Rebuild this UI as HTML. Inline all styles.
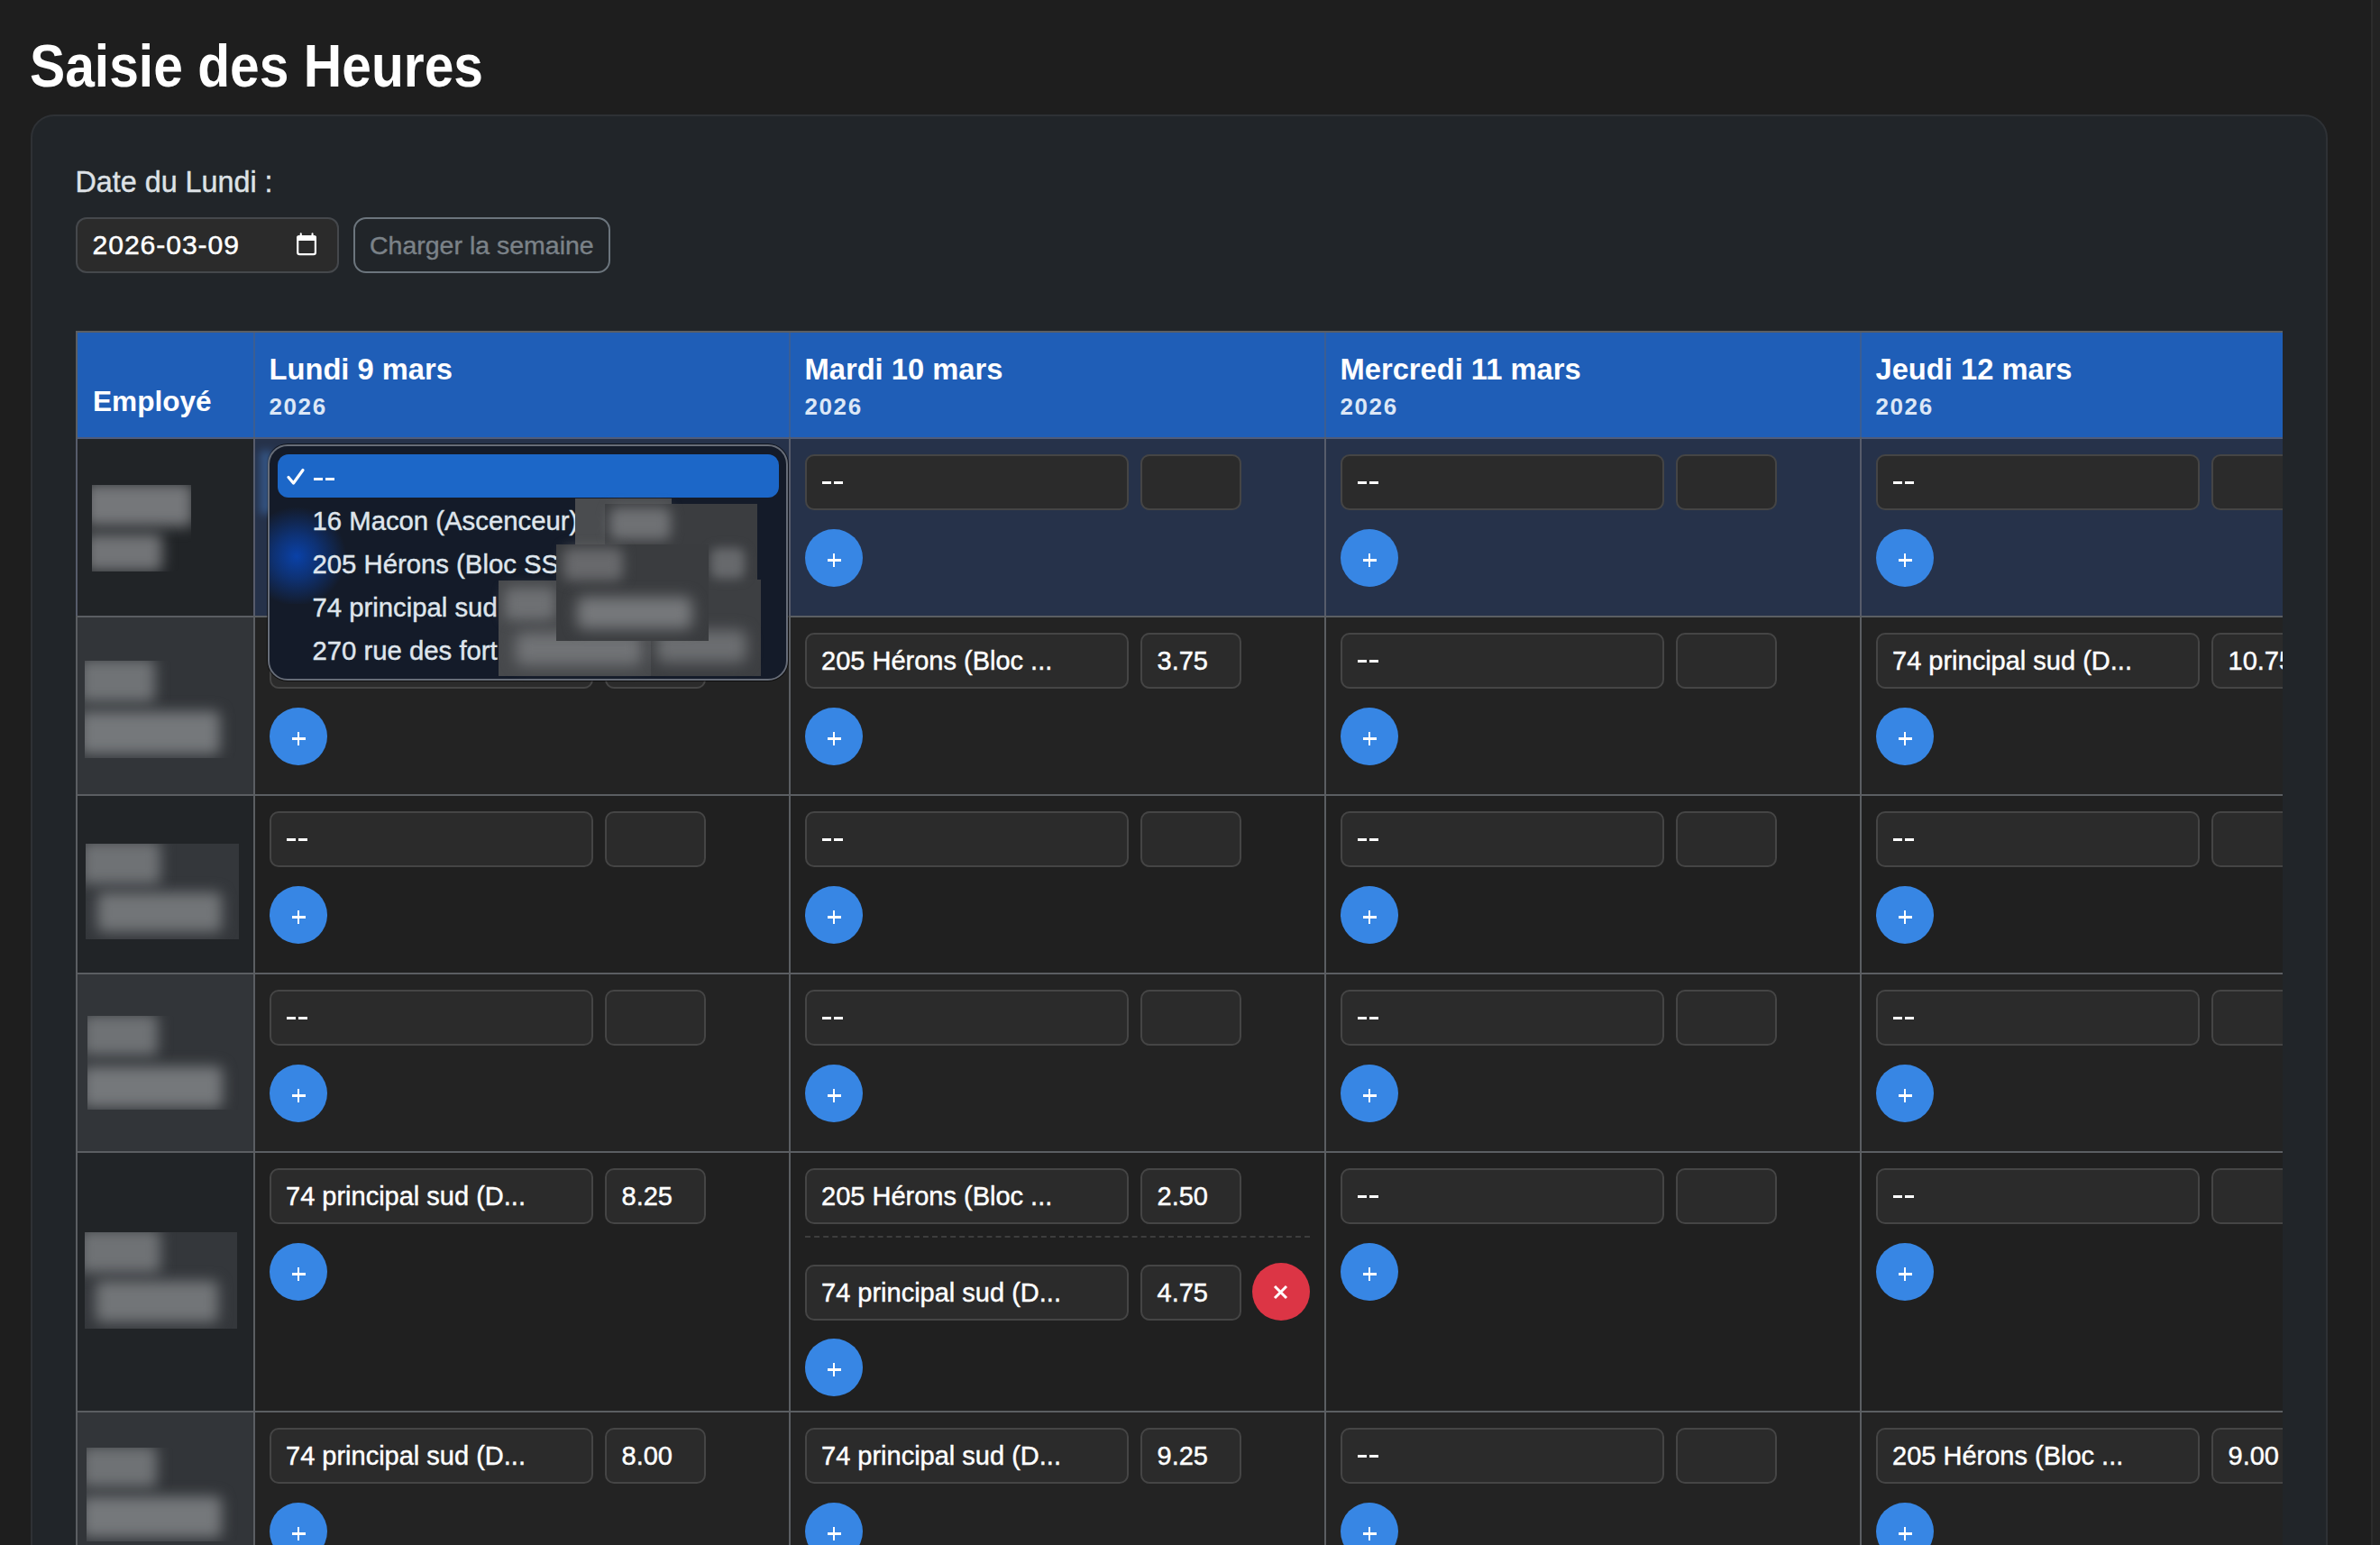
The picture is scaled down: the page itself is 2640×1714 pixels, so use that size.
<!DOCTYPE html>
<html><head><meta charset="utf-8"><style>
html{margin:0;padding:0;width:2640px;height:1714px;overflow:hidden;background:#1e1e1e;}
body{margin:0;padding:0;}
body{width:2640px;height:1714px;background:#1e1e1e;overflow:hidden;position:relative;font-family:"Liberation Sans", sans-serif;}
body div, body svg{position:absolute;}
.t{white-space:pre;}
</style></head><body>
<div style="left:0;top:0;width:2640px;height:1714px;overflow:hidden">
<div style="left:2630px;top:0px;width:2px;height:1714px;background:#2c2c2c"></div>
<div style="left:2632px;top:0px;width:8px;height:1714px;background:#232323"></div>
<div class="t" style="left:33px;top:39.28px;font-size:67px;line-height:67px;color:#fff;font-weight:700;transform:scaleX(0.877);transform-origin:0 0;">Saisie des Heures</div>
<div style="left:34px;top:127px;width:2548px;height:1700px;box-sizing:border-box;border:2px solid #2e3135;border-radius:26px;background:#212529"></div>
<div class="t" style="left:83.5px;top:185.66px;font-size:32.3px;line-height:32.3px;color:#dee2e6;font-weight:400;-webkit-text-stroke:0.4px #dee2e6;">Date du Lundi :</div>
<div style="left:84px;top:241px;width:292px;height:62px;box-sizing:border-box;border:2px solid #45484c;border-radius:12px;background:#2b2b2b"></div>
<div class="t" style="left:102.5px;top:256.74px;font-size:30.2px;line-height:30.2px;color:#fff;font-weight:400;letter-spacing:0.9px;-webkit-text-stroke:0.45px #fff;">2026-03-09</div>
<svg style="position:absolute;left:320px;top:250px" width="40" height="40" viewBox="0 0 40 40"><rect x="10.2" y="12.3" width="19.7" height="19.8" rx="2.2" fill="none" stroke="#fff" stroke-width="2.2"/><rect x="9.1" y="11.2" width="21.9" height="5.8" rx="2" fill="#fff"/><path d="M13.75 9.4 V12 M26.55 9.4 V12" stroke="#fff" stroke-width="2.1" stroke-linecap="round"/></svg>
<div style="left:392px;top:241px;width:285px;height:62px;box-sizing:border-box;border:2px solid #6c757d;border-radius:14px;background:transparent"></div>
<div class="t" style="left:410px;top:257.87px;font-size:28.5px;line-height:28.5px;color:#7b8288;font-weight:400;-webkit-text-stroke:0.4px #7b8288;">Charger la semaine</div>
<div style="left:84px;top:0px;width:2448px;height:1714px;overflow:hidden">
<div style="left:0px;top:367px;width:2500px;height:2px;background:#5b5e62"></div>
<div style="left:0px;top:369px;width:2500px;height:116px;background:#1f5eb7"></div>
<div style="left:0px;top:485px;width:2500px;height:2px;background:#4f5c7a"></div>
<div style="left:2px;top:487px;width:195px;height:196px;background:#212427"></div>
<div style="left:199px;top:487px;width:2300px;height:196px;background:#26324a"></div>
<div style="left:2px;top:685px;width:195px;height:196px;background:#323539"></div>
<div style="left:199px;top:685px;width:2300px;height:196px;background:#232323"></div>
<div style="left:2px;top:883px;width:195px;height:196px;background:#212427"></div>
<div style="left:199px;top:883px;width:2300px;height:196px;background:#202020"></div>
<div style="left:2px;top:1081px;width:195px;height:196px;background:#323539"></div>
<div style="left:199px;top:1081px;width:2300px;height:196px;background:#232323"></div>
<div style="left:2px;top:1279px;width:195px;height:286px;background:#212427"></div>
<div style="left:199px;top:1279px;width:2300px;height:286px;background:#202020"></div>
<div style="left:2px;top:1567px;width:195px;height:233px;background:#323539"></div>
<div style="left:199px;top:1567px;width:2300px;height:233px;background:#232323"></div>
<div style="left:0px;top:683px;width:2500px;height:2px;background:#5b5e62"></div>
<div style="left:0px;top:881px;width:2500px;height:2px;background:#5b5e62"></div>
<div style="left:0px;top:1079px;width:2500px;height:2px;background:#5b5e62"></div>
<div style="left:0px;top:1277px;width:2500px;height:2px;background:#5b5e62"></div>
<div style="left:0px;top:1565px;width:2500px;height:2px;background:#5b5e62"></div>
<div style="left:0px;top:485px;width:2px;height:1400px;background:#5b5e62"></div>
<div style="left:0px;top:369px;width:2px;height:116px;background:#5b5e62"></div>
<div style="left:0px;top:487px;width:2px;height:196px;background:#575c6b"></div>
<div style="left:197px;top:485px;width:2px;height:1400px;background:#5b5e62"></div>
<div style="left:197px;top:369px;width:2px;height:116px;background:#3b5e93"></div>
<div style="left:197px;top:487px;width:2px;height:196px;background:#575c6b"></div>
<div style="left:791px;top:485px;width:2px;height:1400px;background:#5b5e62"></div>
<div style="left:791px;top:369px;width:2px;height:116px;background:#3b5e93"></div>
<div style="left:791px;top:487px;width:2px;height:196px;background:#575c6b"></div>
<div style="left:1385px;top:485px;width:2px;height:1400px;background:#5b5e62"></div>
<div style="left:1385px;top:369px;width:2px;height:116px;background:#3b5e93"></div>
<div style="left:1385px;top:487px;width:2px;height:196px;background:#575c6b"></div>
<div style="left:1979px;top:485px;width:2px;height:1400px;background:#5b5e62"></div>
<div style="left:1979px;top:369px;width:2px;height:116px;background:#3b5e93"></div>
<div style="left:1979px;top:487px;width:2px;height:196px;background:#575c6b"></div>
<div class="t" style="left:19px;top:430.25px;font-size:31.6px;line-height:31.6px;color:#fff;font-weight:700;">Employé</div>
<div class="t" style="left:214.5px;top:394.32px;font-size:32.7px;line-height:32.7px;color:#fff;font-weight:700;">Lundi 9 mars</div>
<div class="t" style="left:214.5px;top:438.49px;font-size:26px;line-height:26px;color:#dce7f6;font-weight:700;letter-spacing:1.6px">2026</div>
<div class="t" style="left:808.5px;top:394.32px;font-size:32.7px;line-height:32.7px;color:#fff;font-weight:700;">Mardi 10 mars</div>
<div class="t" style="left:808.5px;top:438.49px;font-size:26px;line-height:26px;color:#dce7f6;font-weight:700;letter-spacing:1.6px">2026</div>
<div class="t" style="left:1402.5px;top:394.32px;font-size:32.7px;line-height:32.7px;color:#fff;font-weight:700;">Mercredi 11 mars</div>
<div class="t" style="left:1402.5px;top:438.49px;font-size:26px;line-height:26px;color:#dce7f6;font-weight:700;letter-spacing:1.6px">2026</div>
<div class="t" style="left:1996.5px;top:394.32px;font-size:32.7px;line-height:32.7px;color:#fff;font-weight:700;">Jeudi 12 mars</div>
<div class="t" style="left:1996.5px;top:438.49px;font-size:26px;line-height:26px;color:#dce7f6;font-weight:700;letter-spacing:1.6px">2026</div>
<div style="left:215px;top:504px;width:359px;height:62px;box-sizing:border-box;border:2px solid #454545;border-radius:10px;background:#2b2b2b"></div>
<div style="left:587px;top:504px;width:112px;height:62px;box-sizing:border-box;border:2px solid #454545;border-radius:10px;background:#2b2b2b"></div>
<div style="left:234px;top:534px;width:10px;height:3.2px;background:#fff"></div>
<div style="left:247px;top:534px;width:10px;height:3.2px;background:#fff"></div>
<div style="left:215px;top:587px;width:64px;height:64px;border-radius:50%;background:#3786e4"></div>
<div style="left:239.5px;top:620.2px;width:15px;height:2.6px;background:#fff"></div>
<div style="left:245.7px;top:614px;width:2.6px;height:15px;background:#fff"></div>
<div style="left:809px;top:504px;width:359px;height:62px;box-sizing:border-box;border:2px solid #454545;border-radius:10px;background:#2b2b2b"></div>
<div style="left:1181px;top:504px;width:112px;height:62px;box-sizing:border-box;border:2px solid #454545;border-radius:10px;background:#2b2b2b"></div>
<div style="left:828px;top:534px;width:10px;height:3.2px;background:#fff"></div>
<div style="left:841px;top:534px;width:10px;height:3.2px;background:#fff"></div>
<div style="left:809px;top:587px;width:64px;height:64px;border-radius:50%;background:#3786e4"></div>
<div style="left:833.5px;top:620.2px;width:15px;height:2.6px;background:#fff"></div>
<div style="left:839.7px;top:614px;width:2.6px;height:15px;background:#fff"></div>
<div style="left:1403px;top:504px;width:359px;height:62px;box-sizing:border-box;border:2px solid #454545;border-radius:10px;background:#2b2b2b"></div>
<div style="left:1775px;top:504px;width:112px;height:62px;box-sizing:border-box;border:2px solid #454545;border-radius:10px;background:#2b2b2b"></div>
<div style="left:1422px;top:534px;width:10px;height:3.2px;background:#fff"></div>
<div style="left:1435px;top:534px;width:10px;height:3.2px;background:#fff"></div>
<div style="left:1403px;top:587px;width:64px;height:64px;border-radius:50%;background:#3786e4"></div>
<div style="left:1427.5px;top:620.2px;width:15px;height:2.6px;background:#fff"></div>
<div style="left:1433.7px;top:614px;width:2.6px;height:15px;background:#fff"></div>
<div style="left:1997px;top:504px;width:359px;height:62px;box-sizing:border-box;border:2px solid #454545;border-radius:10px;background:#2b2b2b"></div>
<div style="left:2369px;top:504px;width:112px;height:62px;box-sizing:border-box;border:2px solid #454545;border-radius:10px;background:#2b2b2b"></div>
<div style="left:2016px;top:534px;width:10px;height:3.2px;background:#fff"></div>
<div style="left:2029px;top:534px;width:10px;height:3.2px;background:#fff"></div>
<div style="left:1997px;top:587px;width:64px;height:64px;border-radius:50%;background:#3786e4"></div>
<div style="left:2021.5px;top:620.2px;width:15px;height:2.6px;background:#fff"></div>
<div style="left:2027.6999999999998px;top:614px;width:2.6px;height:15px;background:#fff"></div>
<div style="left:215px;top:702px;width:359px;height:62px;box-sizing:border-box;border:2px solid #454545;border-radius:10px;background:#2b2b2b"></div>
<div style="left:587px;top:702px;width:112px;height:62px;box-sizing:border-box;border:2px solid #454545;border-radius:10px;background:#2b2b2b"></div>
<div style="left:234px;top:732px;width:10px;height:3.2px;background:#fff"></div>
<div style="left:247px;top:732px;width:10px;height:3.2px;background:#fff"></div>
<div style="left:215px;top:785px;width:64px;height:64px;border-radius:50%;background:#3786e4"></div>
<div style="left:239.5px;top:818.2px;width:15px;height:2.6px;background:#fff"></div>
<div style="left:245.7px;top:812px;width:2.6px;height:15px;background:#fff"></div>
<div style="left:809px;top:702px;width:359px;height:62px;box-sizing:border-box;border:2px solid #454545;border-radius:10px;background:#2b2b2b"></div>
<div style="left:1181px;top:702px;width:112px;height:62px;box-sizing:border-box;border:2px solid #454545;border-radius:10px;background:#2b2b2b"></div>
<div class="t" style="left:827px;top:719.45px;font-size:29px;line-height:29px;color:#fff;font-weight:400;-webkit-text-stroke:0.45px #fff;">205 Hérons (Bloc ...</div>
<div class="t" style="left:1199.5px;top:719.45px;font-size:29px;line-height:29px;color:#fff;font-weight:400;-webkit-text-stroke:0.45px #fff;">3.75</div>
<div style="left:809px;top:785px;width:64px;height:64px;border-radius:50%;background:#3786e4"></div>
<div style="left:833.5px;top:818.2px;width:15px;height:2.6px;background:#fff"></div>
<div style="left:839.7px;top:812px;width:2.6px;height:15px;background:#fff"></div>
<div style="left:1403px;top:702px;width:359px;height:62px;box-sizing:border-box;border:2px solid #454545;border-radius:10px;background:#2b2b2b"></div>
<div style="left:1775px;top:702px;width:112px;height:62px;box-sizing:border-box;border:2px solid #454545;border-radius:10px;background:#2b2b2b"></div>
<div style="left:1422px;top:732px;width:10px;height:3.2px;background:#fff"></div>
<div style="left:1435px;top:732px;width:10px;height:3.2px;background:#fff"></div>
<div style="left:1403px;top:785px;width:64px;height:64px;border-radius:50%;background:#3786e4"></div>
<div style="left:1427.5px;top:818.2px;width:15px;height:2.6px;background:#fff"></div>
<div style="left:1433.7px;top:812px;width:2.6px;height:15px;background:#fff"></div>
<div style="left:1997px;top:702px;width:359px;height:62px;box-sizing:border-box;border:2px solid #454545;border-radius:10px;background:#2b2b2b"></div>
<div style="left:2369px;top:702px;width:112px;height:62px;box-sizing:border-box;border:2px solid #454545;border-radius:10px;background:#2b2b2b"></div>
<div class="t" style="left:2015px;top:719.45px;font-size:29px;line-height:29px;color:#fff;font-weight:400;-webkit-text-stroke:0.45px #fff;">74 principal sud (D...</div>
<div class="t" style="left:2387.5px;top:719.45px;font-size:29px;line-height:29px;color:#fff;font-weight:400;-webkit-text-stroke:0.45px #fff;">10.75</div>
<div style="left:1997px;top:785px;width:64px;height:64px;border-radius:50%;background:#3786e4"></div>
<div style="left:2021.5px;top:818.2px;width:15px;height:2.6px;background:#fff"></div>
<div style="left:2027.6999999999998px;top:812px;width:2.6px;height:15px;background:#fff"></div>
<div style="left:215px;top:900px;width:359px;height:62px;box-sizing:border-box;border:2px solid #454545;border-radius:10px;background:#2b2b2b"></div>
<div style="left:587px;top:900px;width:112px;height:62px;box-sizing:border-box;border:2px solid #454545;border-radius:10px;background:#2b2b2b"></div>
<div style="left:234px;top:930px;width:10px;height:3.2px;background:#fff"></div>
<div style="left:247px;top:930px;width:10px;height:3.2px;background:#fff"></div>
<div style="left:215px;top:983px;width:64px;height:64px;border-radius:50%;background:#3786e4"></div>
<div style="left:239.5px;top:1016.2px;width:15px;height:2.6px;background:#fff"></div>
<div style="left:245.7px;top:1010px;width:2.6px;height:15px;background:#fff"></div>
<div style="left:809px;top:900px;width:359px;height:62px;box-sizing:border-box;border:2px solid #454545;border-radius:10px;background:#2b2b2b"></div>
<div style="left:1181px;top:900px;width:112px;height:62px;box-sizing:border-box;border:2px solid #454545;border-radius:10px;background:#2b2b2b"></div>
<div style="left:828px;top:930px;width:10px;height:3.2px;background:#fff"></div>
<div style="left:841px;top:930px;width:10px;height:3.2px;background:#fff"></div>
<div style="left:809px;top:983px;width:64px;height:64px;border-radius:50%;background:#3786e4"></div>
<div style="left:833.5px;top:1016.2px;width:15px;height:2.6px;background:#fff"></div>
<div style="left:839.7px;top:1010px;width:2.6px;height:15px;background:#fff"></div>
<div style="left:1403px;top:900px;width:359px;height:62px;box-sizing:border-box;border:2px solid #454545;border-radius:10px;background:#2b2b2b"></div>
<div style="left:1775px;top:900px;width:112px;height:62px;box-sizing:border-box;border:2px solid #454545;border-radius:10px;background:#2b2b2b"></div>
<div style="left:1422px;top:930px;width:10px;height:3.2px;background:#fff"></div>
<div style="left:1435px;top:930px;width:10px;height:3.2px;background:#fff"></div>
<div style="left:1403px;top:983px;width:64px;height:64px;border-radius:50%;background:#3786e4"></div>
<div style="left:1427.5px;top:1016.2px;width:15px;height:2.6px;background:#fff"></div>
<div style="left:1433.7px;top:1010px;width:2.6px;height:15px;background:#fff"></div>
<div style="left:1997px;top:900px;width:359px;height:62px;box-sizing:border-box;border:2px solid #454545;border-radius:10px;background:#2b2b2b"></div>
<div style="left:2369px;top:900px;width:112px;height:62px;box-sizing:border-box;border:2px solid #454545;border-radius:10px;background:#2b2b2b"></div>
<div style="left:2016px;top:930px;width:10px;height:3.2px;background:#fff"></div>
<div style="left:2029px;top:930px;width:10px;height:3.2px;background:#fff"></div>
<div style="left:1997px;top:983px;width:64px;height:64px;border-radius:50%;background:#3786e4"></div>
<div style="left:2021.5px;top:1016.2px;width:15px;height:2.6px;background:#fff"></div>
<div style="left:2027.6999999999998px;top:1010px;width:2.6px;height:15px;background:#fff"></div>
<div style="left:215px;top:1098px;width:359px;height:62px;box-sizing:border-box;border:2px solid #454545;border-radius:10px;background:#2b2b2b"></div>
<div style="left:587px;top:1098px;width:112px;height:62px;box-sizing:border-box;border:2px solid #454545;border-radius:10px;background:#2b2b2b"></div>
<div style="left:234px;top:1128px;width:10px;height:3.2px;background:#fff"></div>
<div style="left:247px;top:1128px;width:10px;height:3.2px;background:#fff"></div>
<div style="left:215px;top:1181px;width:64px;height:64px;border-radius:50%;background:#3786e4"></div>
<div style="left:239.5px;top:1214.2px;width:15px;height:2.6px;background:#fff"></div>
<div style="left:245.7px;top:1208px;width:2.6px;height:15px;background:#fff"></div>
<div style="left:809px;top:1098px;width:359px;height:62px;box-sizing:border-box;border:2px solid #454545;border-radius:10px;background:#2b2b2b"></div>
<div style="left:1181px;top:1098px;width:112px;height:62px;box-sizing:border-box;border:2px solid #454545;border-radius:10px;background:#2b2b2b"></div>
<div style="left:828px;top:1128px;width:10px;height:3.2px;background:#fff"></div>
<div style="left:841px;top:1128px;width:10px;height:3.2px;background:#fff"></div>
<div style="left:809px;top:1181px;width:64px;height:64px;border-radius:50%;background:#3786e4"></div>
<div style="left:833.5px;top:1214.2px;width:15px;height:2.6px;background:#fff"></div>
<div style="left:839.7px;top:1208px;width:2.6px;height:15px;background:#fff"></div>
<div style="left:1403px;top:1098px;width:359px;height:62px;box-sizing:border-box;border:2px solid #454545;border-radius:10px;background:#2b2b2b"></div>
<div style="left:1775px;top:1098px;width:112px;height:62px;box-sizing:border-box;border:2px solid #454545;border-radius:10px;background:#2b2b2b"></div>
<div style="left:1422px;top:1128px;width:10px;height:3.2px;background:#fff"></div>
<div style="left:1435px;top:1128px;width:10px;height:3.2px;background:#fff"></div>
<div style="left:1403px;top:1181px;width:64px;height:64px;border-radius:50%;background:#3786e4"></div>
<div style="left:1427.5px;top:1214.2px;width:15px;height:2.6px;background:#fff"></div>
<div style="left:1433.7px;top:1208px;width:2.6px;height:15px;background:#fff"></div>
<div style="left:1997px;top:1098px;width:359px;height:62px;box-sizing:border-box;border:2px solid #454545;border-radius:10px;background:#2b2b2b"></div>
<div style="left:2369px;top:1098px;width:112px;height:62px;box-sizing:border-box;border:2px solid #454545;border-radius:10px;background:#2b2b2b"></div>
<div style="left:2016px;top:1128px;width:10px;height:3.2px;background:#fff"></div>
<div style="left:2029px;top:1128px;width:10px;height:3.2px;background:#fff"></div>
<div style="left:1997px;top:1181px;width:64px;height:64px;border-radius:50%;background:#3786e4"></div>
<div style="left:2021.5px;top:1214.2px;width:15px;height:2.6px;background:#fff"></div>
<div style="left:2027.6999999999998px;top:1208px;width:2.6px;height:15px;background:#fff"></div>
<div style="left:215px;top:1296px;width:359px;height:62px;box-sizing:border-box;border:2px solid #454545;border-radius:10px;background:#2b2b2b"></div>
<div style="left:587px;top:1296px;width:112px;height:62px;box-sizing:border-box;border:2px solid #454545;border-radius:10px;background:#2b2b2b"></div>
<div class="t" style="left:233px;top:1313.45px;font-size:29px;line-height:29px;color:#fff;font-weight:400;-webkit-text-stroke:0.45px #fff;">74 principal sud (D...</div>
<div class="t" style="left:605.5px;top:1313.45px;font-size:29px;line-height:29px;color:#fff;font-weight:400;-webkit-text-stroke:0.45px #fff;">8.25</div>
<div style="left:215px;top:1379px;width:64px;height:64px;border-radius:50%;background:#3786e4"></div>
<div style="left:239.5px;top:1412.2px;width:15px;height:2.6px;background:#fff"></div>
<div style="left:245.7px;top:1406px;width:2.6px;height:15px;background:#fff"></div>
<div style="left:809px;top:1296px;width:359px;height:62px;box-sizing:border-box;border:2px solid #454545;border-radius:10px;background:#2b2b2b"></div>
<div style="left:1181px;top:1296px;width:112px;height:62px;box-sizing:border-box;border:2px solid #454545;border-radius:10px;background:#2b2b2b"></div>
<div class="t" style="left:827px;top:1313.45px;font-size:29px;line-height:29px;color:#fff;font-weight:400;-webkit-text-stroke:0.45px #fff;">205 Hérons (Bloc ...</div>
<div class="t" style="left:1199.5px;top:1313.45px;font-size:29px;line-height:29px;color:#fff;font-weight:400;-webkit-text-stroke:0.45px #fff;">2.50</div>
<div style="left:809px;top:1371px;width:560px;height:0;border-top:2px dashed #3d3d3d"></div>
<div style="left:809px;top:1403px;width:359px;height:62px;box-sizing:border-box;border:2px solid #454545;border-radius:10px;background:#2b2b2b"></div>
<div style="left:1181px;top:1403px;width:112px;height:62px;box-sizing:border-box;border:2px solid #454545;border-radius:10px;background:#2b2b2b"></div>
<div class="t" style="left:827px;top:1420.45px;font-size:29px;line-height:29px;color:#fff;font-weight:400;-webkit-text-stroke:0.45px #fff;">74 principal sud (D...</div>
<div class="t" style="left:1199.5px;top:1420.45px;font-size:29px;line-height:29px;color:#fff;font-weight:400;-webkit-text-stroke:0.45px #fff;">4.75</div>
<div style="left:1305px;top:1401px;width:64px;height:64px;border-radius:50%;background:#dc3545"></div>
<svg style="position:absolute;left:1327px;top:1423px" width="20" height="20" viewBox="0 0 20 20"><path d="M3 4 L16 17 M16 4 L3 17" stroke="#fff" stroke-width="3"/></svg>
<div style="left:809px;top:1485px;width:64px;height:64px;border-radius:50%;background:#3786e4"></div>
<div style="left:833.5px;top:1518.2px;width:15px;height:2.6px;background:#fff"></div>
<div style="left:839.7px;top:1512px;width:2.6px;height:15px;background:#fff"></div>
<div style="left:1403px;top:1296px;width:359px;height:62px;box-sizing:border-box;border:2px solid #454545;border-radius:10px;background:#2b2b2b"></div>
<div style="left:1775px;top:1296px;width:112px;height:62px;box-sizing:border-box;border:2px solid #454545;border-radius:10px;background:#2b2b2b"></div>
<div style="left:1422px;top:1326px;width:10px;height:3.2px;background:#fff"></div>
<div style="left:1435px;top:1326px;width:10px;height:3.2px;background:#fff"></div>
<div style="left:1403px;top:1379px;width:64px;height:64px;border-radius:50%;background:#3786e4"></div>
<div style="left:1427.5px;top:1412.2px;width:15px;height:2.6px;background:#fff"></div>
<div style="left:1433.7px;top:1406px;width:2.6px;height:15px;background:#fff"></div>
<div style="left:1997px;top:1296px;width:359px;height:62px;box-sizing:border-box;border:2px solid #454545;border-radius:10px;background:#2b2b2b"></div>
<div style="left:2369px;top:1296px;width:112px;height:62px;box-sizing:border-box;border:2px solid #454545;border-radius:10px;background:#2b2b2b"></div>
<div style="left:2016px;top:1326px;width:10px;height:3.2px;background:#fff"></div>
<div style="left:2029px;top:1326px;width:10px;height:3.2px;background:#fff"></div>
<div style="left:1997px;top:1379px;width:64px;height:64px;border-radius:50%;background:#3786e4"></div>
<div style="left:2021.5px;top:1412.2px;width:15px;height:2.6px;background:#fff"></div>
<div style="left:2027.6999999999998px;top:1406px;width:2.6px;height:15px;background:#fff"></div>
<div style="left:215px;top:1584px;width:359px;height:62px;box-sizing:border-box;border:2px solid #454545;border-radius:10px;background:#2b2b2b"></div>
<div style="left:587px;top:1584px;width:112px;height:62px;box-sizing:border-box;border:2px solid #454545;border-radius:10px;background:#2b2b2b"></div>
<div class="t" style="left:233px;top:1601.45px;font-size:29px;line-height:29px;color:#fff;font-weight:400;-webkit-text-stroke:0.45px #fff;">74 principal sud (D...</div>
<div class="t" style="left:605.5px;top:1601.45px;font-size:29px;line-height:29px;color:#fff;font-weight:400;-webkit-text-stroke:0.45px #fff;">8.00</div>
<div style="left:215px;top:1667px;width:64px;height:64px;border-radius:50%;background:#3786e4"></div>
<div style="left:239.5px;top:1700.2px;width:15px;height:2.6px;background:#fff"></div>
<div style="left:245.7px;top:1694px;width:2.6px;height:15px;background:#fff"></div>
<div style="left:809px;top:1584px;width:359px;height:62px;box-sizing:border-box;border:2px solid #454545;border-radius:10px;background:#2b2b2b"></div>
<div style="left:1181px;top:1584px;width:112px;height:62px;box-sizing:border-box;border:2px solid #454545;border-radius:10px;background:#2b2b2b"></div>
<div class="t" style="left:827px;top:1601.45px;font-size:29px;line-height:29px;color:#fff;font-weight:400;-webkit-text-stroke:0.45px #fff;">74 principal sud (D...</div>
<div class="t" style="left:1199.5px;top:1601.45px;font-size:29px;line-height:29px;color:#fff;font-weight:400;-webkit-text-stroke:0.45px #fff;">9.25</div>
<div style="left:809px;top:1667px;width:64px;height:64px;border-radius:50%;background:#3786e4"></div>
<div style="left:833.5px;top:1700.2px;width:15px;height:2.6px;background:#fff"></div>
<div style="left:839.7px;top:1694px;width:2.6px;height:15px;background:#fff"></div>
<div style="left:1403px;top:1584px;width:359px;height:62px;box-sizing:border-box;border:2px solid #454545;border-radius:10px;background:#2b2b2b"></div>
<div style="left:1775px;top:1584px;width:112px;height:62px;box-sizing:border-box;border:2px solid #454545;border-radius:10px;background:#2b2b2b"></div>
<div style="left:1422px;top:1614px;width:10px;height:3.2px;background:#fff"></div>
<div style="left:1435px;top:1614px;width:10px;height:3.2px;background:#fff"></div>
<div style="left:1403px;top:1667px;width:64px;height:64px;border-radius:50%;background:#3786e4"></div>
<div style="left:1427.5px;top:1700.2px;width:15px;height:2.6px;background:#fff"></div>
<div style="left:1433.7px;top:1694px;width:2.6px;height:15px;background:#fff"></div>
<div style="left:1997px;top:1584px;width:359px;height:62px;box-sizing:border-box;border:2px solid #454545;border-radius:10px;background:#2b2b2b"></div>
<div style="left:2369px;top:1584px;width:112px;height:62px;box-sizing:border-box;border:2px solid #454545;border-radius:10px;background:#2b2b2b"></div>
<div class="t" style="left:2015px;top:1601.45px;font-size:29px;line-height:29px;color:#fff;font-weight:400;-webkit-text-stroke:0.45px #fff;">205 Hérons (Bloc ...</div>
<div class="t" style="left:2387.5px;top:1601.45px;font-size:29px;line-height:29px;color:#fff;font-weight:400;-webkit-text-stroke:0.45px #fff;">9.00</div>
<div style="left:1997px;top:1667px;width:64px;height:64px;border-radius:50%;background:#3786e4"></div>
<div style="left:2021.5px;top:1700.2px;width:15px;height:2.6px;background:#fff"></div>
<div style="left:2027.6999999999998px;top:1694px;width:2.6px;height:15px;background:#fff"></div>
<div style="left:18px;top:538px;width:110px;height:96px;overflow:hidden;">
<div style="left:-8px;top:-2px;width:120px;height:48px;background:#75777a;filter:blur(7.5px);border-radius:6px"></div>
<div style="left:-8px;top:54px;width:86px;height:42px;background:#727477;filter:blur(7.5px);border-radius:6px"></div>
</div>
<div style="left:10px;top:733px;width:175px;height:108px;overflow:hidden;">
<div style="left:-6px;top:-2px;width:84px;height:48px;background:#707376;filter:blur(7.5px);border-radius:6px"></div>
<div style="left:-6px;top:56px;width:156px;height:48px;background:#75787b;filter:blur(7.5px);border-radius:6px"></div>
</div>
<div style="left:11px;top:936px;width:170px;height:106px;overflow:hidden;background:#34373b;">
<div style="left:-5px;top:-3px;width:88px;height:48px;background:#6f7275;filter:blur(7.5px);border-radius:6px"></div>
<div style="left:13px;top:54px;width:138px;height:44px;background:#727578;filter:blur(7.5px);border-radius:6px"></div>
</div>
<div style="left:13px;top:1127px;width:175px;height:104px;overflow:hidden;">
<div style="left:-6px;top:-2px;width:84px;height:46px;background:#6f7275;filter:blur(7.5px);border-radius:6px"></div>
<div style="left:-6px;top:56px;width:156px;height:46px;background:#75787b;filter:blur(7.5px);border-radius:6px"></div>
</div>
<div style="left:10px;top:1367px;width:169px;height:107px;overflow:hidden;background:#34373b;">
<div style="left:-6px;top:-3px;width:90px;height:48px;background:#6f7275;filter:blur(7.5px);border-radius:6px"></div>
<div style="left:12px;top:54px;width:136px;height:46px;background:#727578;filter:blur(7.5px);border-radius:6px"></div>
</div>
<div style="left:12px;top:1606px;width:175px;height:104px;overflow:hidden;">
<div style="left:-6px;top:-2px;width:84px;height:46px;background:#6f7275;filter:blur(7.5px);border-radius:6px"></div>
<div style="left:-6px;top:54px;width:156px;height:46px;background:#75787b;filter:blur(7.5px);border-radius:6px"></div>
</div>
<div style="left:212px;top:492px;width:579px;height:264px;box-sizing:border-box;border-radius:23px;background:#000;opacity:0.6"></div>
<div style="left:204px;top:500px;width:14px;height:70px;background:#3d6aa8;filter:blur(5px);opacity:0.6"></div>
<div style="left:213px;top:493px;width:577px;height:262px;box-sizing:border-box;border:2px solid #676d78;border-radius:22px;background:#141b29;overflow:hidden"></div>
<div style="left:215px;top:560px;width:100px;height:110px;background:radial-gradient(ellipse 55% 50% at 30% 52%, rgba(8,72,190,0.85), rgba(8,72,190,0.5) 45%, rgba(8,72,190,0) 100%)"></div>
<div style="left:224px;top:504px;width:556px;height:48px;border-radius:12px;background:#1c67c8"></div>
<svg style="position:absolute;left:233px;top:518px" width="22" height="22" viewBox="0 0 22 22"><path d="M3 11.5 L8.5 18 L19 3.5" fill="none" stroke="#fff" stroke-width="3.2" stroke-linecap="round" stroke-linejoin="round"/></svg>
<div style="left:263.5px;top:530.3px;width:10px;height:3.2px;background:#fff"></div>
<div style="left:276.5px;top:530.3px;width:10px;height:3.2px;background:#fff"></div>
<div class="t" style="left:262.5px;top:563.20px;font-size:29.3px;line-height:29.3px;color:#dfe5ec;font-weight:400;-webkit-text-stroke:0.45px #dfe5ec;">16 Macon (Ascenceur)</div>
<div class="t" style="left:262.5px;top:610.70px;font-size:29.3px;line-height:29.3px;color:#dfe5ec;font-weight:400;-webkit-text-stroke:0.45px #dfe5ec;">205 Hérons (Bloc SS)</div>
<div class="t" style="left:262.5px;top:659.20px;font-size:29.3px;line-height:29.3px;color:#dfe5ec;font-weight:400;-webkit-text-stroke:0.45px #dfe5ec;">74 principal sud</div>
<div class="t" style="left:262.5px;top:706.70px;font-size:29.3px;line-height:29.3px;color:#dfe5ec;font-weight:400;-webkit-text-stroke:0.45px #dfe5ec;">270 rue des fort</div>
<div style="left:469px;top:644px;width:170px;height:106px;background:#47494c"></div>
<div style="left:476px;top:652px;width:56px;height:36px;background:#6e7073;filter:blur(7px);border-radius:8px"></div>
<div style="left:488px;top:702px;width:140px;height:36px;background:#717376;filter:blur(8px);border-radius:8px"></div>
<div style="left:638px;top:643px;width:122px;height:107px;background:#3d3f42"></div>
<div style="left:644px;top:699px;width:100px;height:36px;background:#6c6e71;filter:blur(8px);border-radius:8px"></div>
<div style="left:554px;top:553px;width:107px;height:51px;background:#4a4c4f"></div>
<div style="left:587px;top:559px;width:169px;height:84px;background:#3b3d40"></div>
<div style="left:592px;top:563px;width:68px;height:36px;background:#6f7174;filter:blur(7px);border-radius:8px"></div>
<div style="left:704px;top:608px;width:38px;height:34px;background:#67696c;filter:blur(6px);border-radius:8px"></div>
<div style="left:533px;top:604px;width:169px;height:107px;background:#3a3c3f"></div>
<div style="left:541px;top:608px;width:66px;height:36px;background:#68696c;filter:blur(7px);border-radius:8px"></div>
<div style="left:556px;top:662px;width:128px;height:36px;background:#76787b;filter:blur(8px);border-radius:8px"></div>
</div>
</div>
</body></html>
